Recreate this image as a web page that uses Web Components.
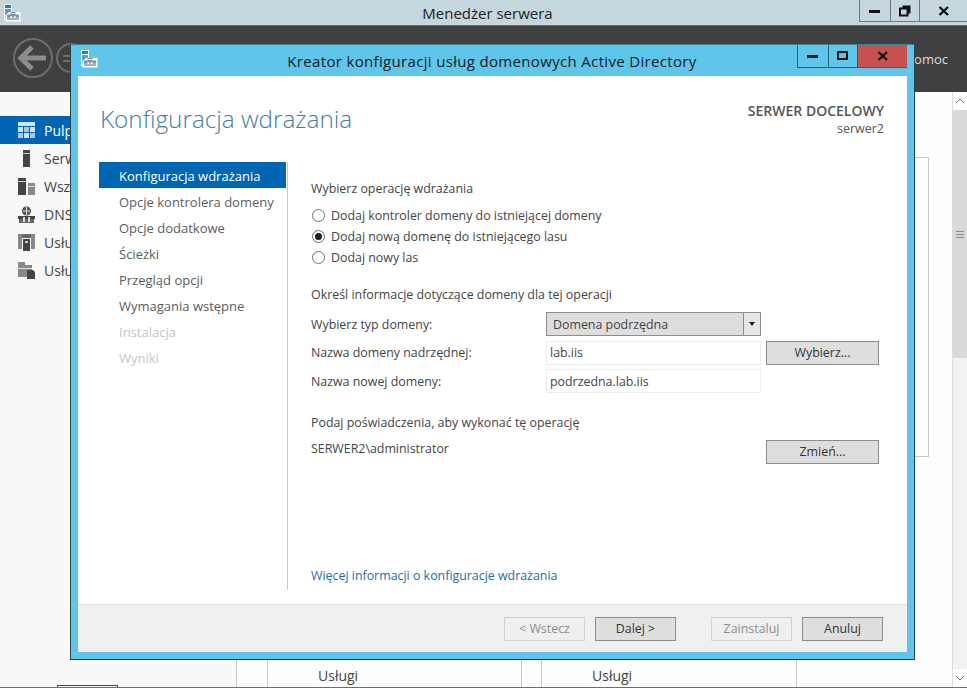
<!DOCTYPE html>
<html lang="pl">
<head>
<meta charset="utf-8">
<title>Menedżer serwera</title>
<style>
	html, body { margin: 0; height: 100%; overflow: hidden; }
	body { font: 12.4px "Open Sans", "Noto Sans", sans-serif; color: #333; }
</style>
</head>
<body>
<srv-manager>
	<srv-wizard></srv-wizard>
</srv-manager>

<script>
(() => {
	/* ikona aplikacji: serwer + skrzynka */
	const APP_ICON = `<svg width="18" height="18" viewBox="0 0 18 18">
		<rect x="1" y="0" width="8" height="16" fill="#fff"/>
		<rect x="2" y="1" width="6" height="3" fill="#1f7fc4"/>
		<rect x="2" y="5" width="6" height="10" fill="#1f7fc4" opacity=".75"/>
		<path d="M6 8h11.5v9.5H2.5V11z" fill="#fff"/>
		<path d="M4 10.5h12v2.5H4z" fill="#7f8fa6"/>
		<path d="M4 13h12v3H4z" fill="#9fb0c4"/>
		<path d="M8 8.5h4v2H8z" fill="none" stroke="#7f8fa6"/>
		<path d="M7.5 12h1.5v2H7.5zM11 12h1.5v2H11z" fill="#fff"/>
	</svg>`;

	const NAV_ICONS = {
		dashboard: `<rect x="0" y="0" width="17" height="4" fill="currentColor"/><rect x="0" y="5" width="5" height="5" fill="currentColor"/><rect x="6" y="5" width="5" height="5" fill="currentColor" opacity=".8"/><rect x="12" y="5" width="5" height="5" fill="currentColor"/><rect x="0" y="11" width="5" height="5" fill="currentColor" opacity=".8"/><rect x="6" y="11" width="5" height="5" fill="currentColor"/><rect x="12" y="11" width="5" height="5" fill="currentColor" opacity=".8"/>`,
		server: `<rect x="5" y="0" width="7" height="17" fill="#444"/><rect x="5" y="3" width="7" height="1" fill="#ccc"/>`,
		servers: `<rect x="0" y="0" width="8" height="17" fill="#444"/><rect x="0" y="3" width="8" height="1" fill="#ccc"/><rect x="10" y="5" width="7" height="12" fill="#888"/><rect x="10" y="8" width="7" height="1" fill="#ddd"/>`,
		dns: `<circle cx="8.5" cy="5" r="4.5" fill="#555"/><path d="M5 5h7M8.5 1v8" stroke="#ddd"/><rect x="0" y="10" width="17" height="3" fill="#444"/><rect x="1" y="13" width="15" height="4" fill="#666"/><rect x="5" y="11" width="2" height="5" fill="#ddd"/><rect x="10" y="11" width="2" height="5" fill="#ddd"/>`,
		ad: `<rect x="0" y="0" width="4" height="15" fill="#888"/><rect x="13" y="0" width="4" height="15" fill="#888"/><rect x="4" y="0" width="9" height="4" fill="#666"/><rect x="5" y="5" width="7" height="12" fill="#444"/><rect x="7" y="7" width="3" height="2" fill="#ccc"/>`,
		files: `<rect x="0" y="0" width="7" height="3" fill="#888"/><rect x="0" y="3" width="14" height="12" fill="#888"/><rect x="0" y="6" width="14" height="1" fill="#ddd"/><path d="M9 8h6l2 2v7H9z" fill="#444"/>`
	};

	/* bazowa klasa: wspólne tworzenie shadow DOM */
	class ShadowElement extends HTMLElement {
		constructor(cssString, htmlString) {
			super();
			const shadow = this.attachShadow({mode: 'open'});
			shadow.innerHTML = `<style>${cssString}</style>${htmlString}`;
		}
	}

	class SrvCaptionButtons extends ShadowElement {
		constructor() {
			super(`
				:host { display: flex; height: var(--h, 21px); border: 1px solid var(--line, #5f7d85); border-top: 0; border-right: var(--right, 0); }
				div { display: flex; align-items: center; justify-content: center; box-sizing: border-box; }
				.min { width: var(--w1, 30px); }
				.max { width: var(--w2, 29px); border-left: 1px solid var(--line, #5f7d85); }
				.close { width: var(--w3, 48px); border-left: 1px solid var(--line, #5f7d85); background: var(--close, transparent); }
				svg { display: block; }
			`, `
				<div class="min"><svg width="12" height="4"><rect width="11" height="3" y="1" fill="#111"/></svg></div>
				<div class="max"><svg width="12" height="12"><path d="M3.5 1.5h7v7M1 3.5h7.5v7H1z" fill="none" stroke="#111" stroke-width="2"/></svg></div>
				<div class="close"><svg width="12" height="10"><path d="M1.5 1l8.5 8M10 1L1.5 9" stroke="#111" stroke-width="2.4"/></svg></div>
			`);
			if (this.hasAttribute('maximize')) {
				this.shadowRoot.querySelector('.max').innerHTML = '<svg width="12" height="10"><rect x="1" y="1" width="9" height="7" fill="none" stroke="#111" stroke-width="2"/></svg>';
			}
		}
	}

	class SrvSideItem extends ShadowElement {
		constructor() {
			super(`
				:host { display: flex; align-items: center; height: 28px; padding-left: 18px; gap: 9px; font-size: 14px; color: #444; white-space: nowrap; }
				:host([active]) { background: #0066b4; color: #fff; }
				:host([active]) svg { color: #cfe3f3; }
				svg { flex: none; display: block; }
			`, `<svg width="17" height="17" viewBox="0 0 17 17"></svg><slot></slot>`);
		}

		connectedCallback() {
			this.shadowRoot.querySelector('svg').innerHTML = NAV_ICONS[this.getAttribute('icon')];
		}
	}

	class SrvManager extends ShadowElement {
		constructor() {
			super(`
				:host { display: flex; flex-direction: column; height: 688px; position: relative; background: #f8f8f8; overflow: hidden; }
				.title { flex: none; height: 25px; display: flex; align-items: flex-start; background: #c5d6dc; border-bottom: 1px solid #5c6a6e; position: relative; }
				.title .icon { margin: 4px 0 0 3px; }
				.title h1 { flex: 1; margin: 3px 0 0 0; font: 400 15px/20px "Open Sans", sans-serif; color: #222; text-align: center; padding-right: 13px; }
				.head { flex: none; height: 66px; background: #404040; display: flex; align-items: center; padding-left: 13px; gap: 0; }
				.head svg + svg { margin-left: -4px; }
				.head .help { margin-left: auto; margin-right: 19px; font-size: 13px; color: #ddd; }
				.work { flex: 1; display: flex; min-height: 0; }
				.side { width: 236px; flex: none; padding-top: 24px; box-sizing: border-box; }
				.main { flex: 1; background: #fdfdfd; border-left: 1px solid #c8c8c8; display: flex; flex-direction: column; min-width: 0; }
				.panel { margin: 65px 23px 0 0; height: 300px; border: 1px solid #c8c8c8; box-sizing: border-box; }
				.tiles { margin: auto 0 0 30px; height: 30px; display: grid; grid-template-columns: 255px 256px; column-gap: 19px; }
				.tile { border: 1px solid #c8c8c8; border-width: 0 1px; padding: 10px 0 0 50px; font-size: 14px; line-height: 18px; color: #444; overflow: hidden; }
				.scroll { width: 14px; flex: none; background: #f2f2f2; border-left: 1px solid #dcdcdc; display: flex; flex-direction: column; }
				.scroll .arrow { height: 18px; display: flex; align-items: center; justify-content: center; background: #fff; }
				.scroll .thumb { height: 248px; background: #d9d9d9; display: flex; align-items: center; justify-content: center; }
				.scroll .arrow:last-child { margin-top: auto; }
				.foot { flex: none; height: 1px; background: #4d7a8a; }
				.tab { position: absolute; left: 57px; bottom: 1px; width: 59px; height: 1px; border: 1px solid #444; border-bottom: 0; }
				srv-caption-buttons { position: absolute; top: 0; right: 0; }
				::slotted(srv-wizard) { position: absolute; left: 70px; top: 44px; }
			`, `
				<div class="title">
					<span class="icon">${APP_ICON}</span>
					<h1>Menedżer serwera</h1>
					<srv-caption-buttons></srv-caption-buttons>
				</div>
				<div class="head">
					<svg width="42" height="42" viewBox="0 0 42 42"><circle cx="20" cy="20" r="19" fill="none" stroke="#6e6e6e" stroke-width="2"/><path d="M8 20h25M19 9L8 20l11 11" fill="none" stroke="#8c8c8c" stroke-width="5"/></svg>
					<svg width="42" height="42" viewBox="0 0 42 42"><circle cx="20" cy="20" r="14" fill="none" stroke="#6e6e6e" stroke-width="2"/><path d="M12 18h16M12 23h16" stroke="#6e6e6e" stroke-width="2"/></svg>
					<span class="help">Pomoc</span>
				</div>
				<div class="work">
					<div class="side">
						<srv-side-item icon="dashboard" active>Pulpit</srv-side-item>
						<srv-side-item icon="server">Serwer</srv-side-item>
						<srv-side-item icon="servers">Wszystkie</srv-side-item>
						<srv-side-item icon="dns">DNS</srv-side-item>
						<srv-side-item icon="ad">Usługi</srv-side-item>
						<srv-side-item icon="files">Usługi</srv-side-item>
					</div>
					<div class="main">
						<div class="panel"></div>
						<div class="tiles">
							<div class="tile">Usługi</div>
							<div class="tile">Usługi</div>
						</div>
					</div>
					<div class="scroll">
						<div class="arrow"><svg width="10" height="6"><path d="M1 5l4-4 4 4" fill="none" stroke="#777"/></svg></div>
						<div class="thumb"><svg width="8" height="7"><path d="M0 .5h8M0 3.5h8M0 6.5h8" stroke="#888"/></svg></div>
						<div class="arrow"><svg width="10" height="6"><path d="M1 1l4 4 4-4" fill="none" stroke="#777"/></svg></div>
					</div>
				</div>
				<div class="foot"></div>
				<div class="tab"></div>
				<slot></slot>
			`);
		}
	}

	class SrvStepItem extends ShadowElement {
		constructor() {
			super(`
				:host { display: flex; align-items: center; box-sizing: border-box; height: 26px; width: 187px; margin-left: -1px; padding: 2px 0 0 20px; font-size: 13px; color: #5c5c5c; white-space: nowrap; }
				:host([current]) { background: #0066b4; color: #fff; }
				:host([disabled]) { color: #c4c4c4; }
			`, `<slot></slot>`);
		}
	}

	class SrvRadio extends ShadowElement {
		constructor() {
			super(`
				:host { display: flex; align-items: center; height: 21px; gap: 6px; color: #444; white-space: nowrap; }
				i { width: 11px; height: 11px; margin-left: 1px; border: 1px solid #707070; border-radius: 50%; background: #fff; display: flex; align-items: center; justify-content: center; }
				:host([checked]) i::before { content: ""; width: 7px; height: 7px; border-radius: 50%; background: #222; }
			`, `<i></i><slot></slot>`);
		}
	}

	class SrvButton extends ShadowElement {
		constructor() {
			super(`
				:host { display: flex; align-items: center; justify-content: center; box-sizing: border-box; height: 24px; width: var(--btn-w, 81px); background: #dedede; border: 1px solid #8c8c8c; color: #333; white-space: nowrap; }
				:host([disabled]) { background: #efefef; border-color: #d2d2d2; color: #8e8e8e; }
			`, `<slot></slot>`);
		}
	}

	class SrvField extends ShadowElement {
		constructor() {
			super(`
				:host { display: flex; align-items: center; box-sizing: border-box; height: 24px; padding-left: 3px; background: #fff; border: 1px solid #ececec; color: #444; }
			`, `<slot></slot>`);
		}
	}

	class SrvSelect extends ShadowElement {
		constructor() {
			super(`
				:host { display: flex; align-items: center; box-sizing: border-box; height: 24px; background: #dedede; border: 1px solid #8c8c8c; color: #444; }
				span { flex: 1; padding-left: 6px; }
				i { width: 17px; height: 100%; box-sizing: border-box; border-left: 1px solid #8c8c8c; background: #e6e6e6; display: flex; align-items: center; justify-content: center; }
				i::before { content: ""; border: 3.5px solid transparent; border-top: 4px solid #222; border-bottom: 0; }
			`, `<span><slot></slot></span><i></i>`);
		}
	}

	class SrvWizard extends ShadowElement {
		constructor() {
			super(`
				:host { display: flex; flex-direction: column; box-sizing: border-box; width: 845px; height: 616px; background: #5fc5e9; border: 1px solid #27404d; border-top-color: #3e7f9c; }
				.caption { flex: none; height: 31px; display: flex; align-items: flex-start; position: relative; }
				.caption .icon { margin: 5px 0 0 9px; }
				.caption h2 { flex: 1; margin: 6px 0 0; font: 400 15px/20px "Open Sans", sans-serif; letter-spacing: .33px; color: #10202a; text-align: center; padding-right: 28px; white-space: nowrap; }
				srv-caption-buttons { position: absolute; top: 0; right: 7px; --line: #2c5f75; --h: 22px; --w1: 30px; --w2: 29px; --w3: 50px; --close: #c75050; }
				.client { flex: 1; display: flex; flex-direction: column; margin: 0 7px 7px; background: #fff; min-height: 0; }
				.body { flex: 1; display: flex; flex-direction: column; min-height: 0; padding: 0 22px 14px; }
				header { flex: none; height: 86px; display: flex; justify-content: space-between; align-items: flex-start; }
				header h1 { margin: 26px 0 0; font: 300 24.3px/34px "Open Sans", sans-serif; color: #3f7ea0; }
				.target { margin-top: 26px; padding-right: 1px; text-align: right; font-size: 12.5px; line-height: 18px; color: #555; }
				.target b { display: block; font-size: 14px; font-weight: 600; }
				.columns { flex: 1; display: flex; min-height: 0; }
				nav { flex: none; width: 188px; box-sizing: border-box; border-right: 1px solid #c8c8c8; }
				section { flex: 1; padding: 18px 6px 0 23px; display: flex; flex-direction: column; color: #444; min-width: 0; }
				p { margin: 0; line-height: 18px; }
				.radios { margin-top: 7px; }
				.info { margin-top: 18px; }
				.form { margin-top: 8px; display: grid; grid-template-columns: 235px 215px 118px; grid-auto-rows: 24px; row-gap: 4.5px; align-items: center; }
				.form srv-button { --btn-w: 113px; justify-self: end; }
				.creds { margin-top: 21px; }
				.user { margin-top: 8px; display: flex; align-items: flex-start; justify-content: space-between; height: 24px; line-height: 18px; }
				.user srv-button { --btn-w: 113px; }
				.more { margin-top: auto; padding-bottom: 5px; color: #1c6ea4; }
				footer { flex: none; height: 47px; background: #f0f0f0; border-top: 1px solid #dfdfdf; display: flex; align-items: center; padding-right: 24px; justify-content: flex-end; gap: 10px; }
				footer .gap { margin-left: 25px; }
			`, `
				<div class="caption">
					<span class="icon">${APP_ICON}</span>
					<h2>Kreator konfiguracji usług domenowych Active Directory</h2>
					<srv-caption-buttons maximize></srv-caption-buttons>
				</div>
				<div class="client">
					<div class="body">
						<header>
							<h1>Konfiguracja wdrażania</h1>
							<div class="target"><b>SERWER DOCELOWY</b>serwer2</div>
						</header>
						<div class="columns">
							<nav>
								<srv-step-item current>Konfiguracja wdrażania</srv-step-item>
								<srv-step-item>Opcje kontrolera domeny</srv-step-item>
								<srv-step-item>Opcje dodatkowe</srv-step-item>
								<srv-step-item>Ścieżki</srv-step-item>
								<srv-step-item>Przegląd opcji</srv-step-item>
								<srv-step-item>Wymagania wstępne</srv-step-item>
								<srv-step-item disabled>Instalacja</srv-step-item>
								<srv-step-item disabled>Wyniki</srv-step-item>
							</nav>
							<section>
								<p>Wybierz operację wdrażania</p>
								<div class="radios">
									<srv-radio>Dodaj kontroler domeny do istniejącej domeny</srv-radio>
									<srv-radio checked>Dodaj nową domenę do istniejącego lasu</srv-radio>
									<srv-radio>Dodaj nowy las</srv-radio>
								</div>
								<p class="info">Określ informacje dotyczące domeny dla tej operacji</p>
								<div class="form">
									<span>Wybierz typ domeny:</span>
									<srv-select>Domena podrzędna</srv-select>
									<span></span>
									<span>Nazwa domeny nadrzędnej:</span>
									<srv-field>lab.iis</srv-field>
									<srv-button>Wybierz...</srv-button>
									<span>Nazwa nowej domeny:</span>
									<srv-field>podrzedna.lab.iis</srv-field>
									<span></span>
								</div>
								<p class="creds">Podaj poświadczenia, aby wykonać tę operację</p>
								<div class="user">
									<span>SERWER2\\administrator</span>
									<srv-button>Zmień...</srv-button>
								</div>
								<p class="more">Więcej informacji o konfiguracje wdrażania</p>
							</section>
						</div>
					</div>
					<footer>
						<srv-button disabled>&lt; Wstecz</srv-button>
						<srv-button>Dalej &gt;</srv-button>
						<srv-button disabled class="gap">Zainstaluj</srv-button>
						<srv-button>Anuluj</srv-button>
					</footer>
				</div>
			`);
		}
	}

	customElements.define('srv-caption-buttons', SrvCaptionButtons);
	customElements.define('srv-side-item', SrvSideItem);
	customElements.define('srv-step-item', SrvStepItem);
	customElements.define('srv-radio', SrvRadio);
	customElements.define('srv-button', SrvButton);
	customElements.define('srv-field', SrvField);
	customElements.define('srv-select', SrvSelect);
	customElements.define('srv-wizard', SrvWizard);
	customElements.define('srv-manager', SrvManager);
})();
</script>
</body>
</html>
